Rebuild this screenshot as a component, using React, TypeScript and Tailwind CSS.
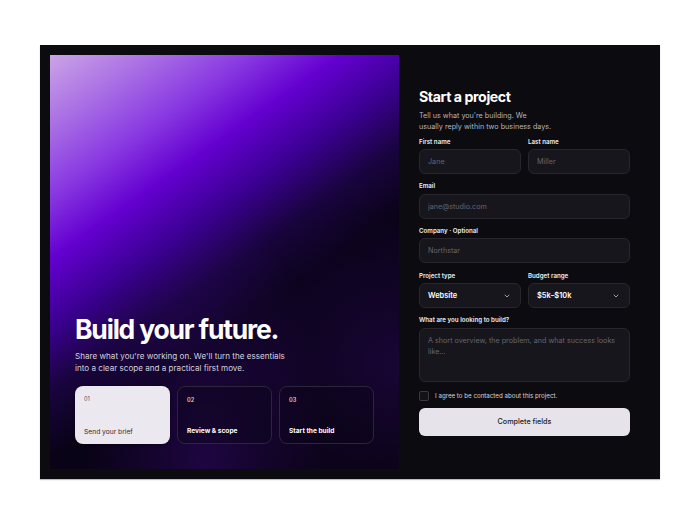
import { ChevronDown } from "lucide-react";

const inputCls =
  "h-[25px] w-full rounded-[6px] border border-[#27262d] bg-[#17161c] px-[8px] text-[7.2px] text-[#e8e7ec] placeholder:text-[#66656d] outline-none";

function Label({ children }: { children: React.ReactNode }) {
  return (
    <label className="mb-[3.5px] block text-[6.2px] font-semibold leading-[8px] text-[#ececf0]">
      {children}
    </label>
  );
}

function Field({ label, placeholder }: { label: string; placeholder: string }) {
  return (
    <div className="flex flex-col">
      <Label>{label}</Label>
      <input className={inputCls} placeholder={placeholder} />
    </div>
  );
}

function SelectField({ label, value }: { label: string; value: string }) {
  return (
    <div className="flex flex-col">
      <Label>{label}</Label>
      <div className="flex h-[25px] w-full items-center justify-between rounded-[6px] border border-[#27262d] bg-[#17161c] pl-[8px] pr-[9px]">
        <span className="text-[7.4px] font-semibold text-white">{value}</span>
        <ChevronDown size={8} strokeWidth={2.2} className="text-[#cfced6]" />
      </div>
    </div>
  );
}

const steps = [
  { n: "01", t: "Send your brief", active: true },
  { n: "02", t: "Review & scope", active: false },
  { n: "03", t: "Start the build", active: false },
];

export default function App() {
  return (
    <div className="h-[525px] w-[700px] bg-white pl-[40px] pt-[45px] font-['Inter',sans-serif]">
      <div className="flex h-[434px] w-[620px] gap-[20px] bg-[#0c0c10] p-[10px] shadow-[0_1px_1px_rgba(0,0,0,0.25)]">
        {/* hero panel */}
        <div className="flex w-[349px] flex-col justify-end bg-[radial-gradient(ellipse_at_45%_100%,rgba(70,10,150,0.35)_0%,transparent_45%),radial-gradient(ellipse_at_100%_75%,rgba(60,10,130,0.3)_0%,transparent_35%),linear-gradient(145deg,#cba4e6_0%,#a66ae4_12%,#8a3be2_21%,#6400d0_31%,#3c0094_41%,#19043f_51%,#0a0318_61%,#07030f_100%)] p-[25px]">
          <h1 className="text-[26.5px] font-bold leading-[28px] tracking-[-0.045em] text-white">
            Build your future.
          </h1>
          <p className="mt-[8px] text-[8.1px] leading-[11.5px] text-[#d3d0da]">
            Share what you're working on. We'll turn the essentials
            <br />
            into a clear scope and a practical first move.
          </p>
          <div className="mt-[12px] grid grid-cols-3 gap-[7px]">
            {steps.map((s) => (
              <div
                key={s.n}
                className={
                  s.active
                    ? "flex h-[58px] flex-col justify-between rounded-[8px] bg-[#ebe8ef] px-[9px] pb-[7px] pt-[9px] shadow-[0_1px_3px_rgba(0,0,0,0.4)]"
                    : "flex h-[58px] flex-col justify-between rounded-[8px] border border-[#2c2638] bg-[rgba(10,6,20,0.35)] px-[9px] pb-[7px] pt-[9px]"
                }
              >
                <span
                  className={
                    s.active
                      ? "text-[5.6px] leading-[8px] text-[#55535c]"
                      : "text-[5.6px] font-semibold leading-[8px] text-[#d8d6dd]"
                  }
                >
                  {s.n}
                </span>
                <span
                  className={
                    s.active
                      ? "text-[6.7px] leading-[10px] text-[#2a2930]"
                      : "text-[6.6px] font-bold leading-[10px] text-white"
                  }
                >
                  {s.t}
                </span>
              </div>
            ))}
          </div>
        </div>

        {/* form */}
        <div className="flex w-[211px] flex-col pt-[31.5px]">
          <h2 className="text-[14.2px] font-bold leading-[20px] tracking-[-0.03em] text-white">
            Start a project
          </h2>
          <p className="mt-[3px] text-[7.2px] leading-[11px] text-[#b6b4bd]">
            Tell us what you're building. We
            <br />
            usually reply within two business days.
          </p>
          <div className="mt-[6px] flex flex-col gap-[8.2px]">
            <div className="grid grid-cols-2 gap-[7px]">
              <Field label="First name" placeholder="Jane" />
              <Field label="Last name" placeholder="Miller" />
            </div>
            <Field label="Email" placeholder="jane@studio.com" />
            <Field label="Company · Optional" placeholder="Northstar" />
            <div className="grid grid-cols-2 gap-[7px]">
              <SelectField label="Project type" value="Website" />
              <SelectField label="Budget range" value="$5k–$10k" />
            </div>
            <div className="flex flex-col">
              <Label>What are you looking to build?</Label>
              <textarea
                className="h-[54px] w-full resize-none rounded-[6px] border border-[#27262d] bg-[#17161c] px-[8px] py-[6px] text-[7.2px] leading-[11px] text-[#e8e7ec] placeholder:text-[#66656d] outline-none"
                placeholder="A short overview, the problem, and what success looks like..."
              />
            </div>
          </div>
          <div className="mt-[9px] flex items-center gap-[6px]">
            <span className="h-[10px] w-[10px] rounded-[2px] border border-[#3a3940] bg-[#141318]" />
            <span className="text-[6.2px] text-[#d6d5db]">I agree to be contacted about this project.</span>
          </div>
          <button className="mt-[7.5px] h-[28px] w-full rounded-[6px] bg-[#e6e3ea] text-[7.2px] font-medium text-[#1c1b21]">
            Complete fields
          </button>
        </div>
      </div>
    </div>
  );
}
